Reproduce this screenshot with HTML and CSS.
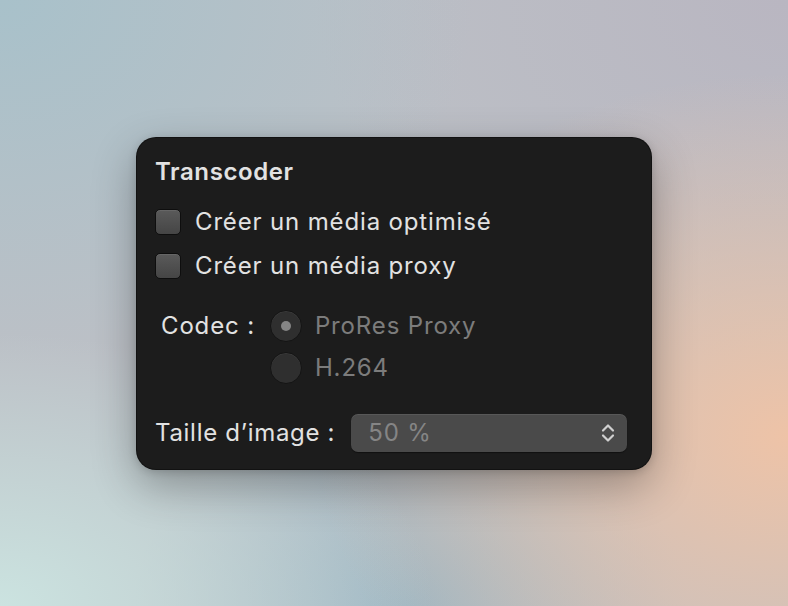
FILE: index.html
```html
<!DOCTYPE html>
<html lang="fr">
<head>
  <meta charset="UTF-8">
  <title>Transcoder</title>
  <link rel="stylesheet" href="styles.css">
</head>
<body>

  <div class="panel">
    <h2 class="title">Transcoder</h2>

    <div class="checks">
      <label class="check-row"><span class="checkbox"></span>Créer un média optimisé</label>
      <label class="check-row"><span class="checkbox"></span>Créer un média proxy</label>
    </div>

    <div class="codec-row">
      <span class="codec-label">Codec :</span>
      <div class="radio-group">
        <label class="radio-row"><span class="radio selected"></span>ProRes Proxy</label>
        <label class="radio-row"><span class="radio"></span>H.264</label>
      </div>
    </div>

    <div class="size-row">
      <span class="size-label">Taille d’image :</span>
      <div class="select">
        <span class="select-value">50 %</span>
        <svg class="stepper" width="14" height="20" viewBox="0 0 14 20">
          <path d="M2 7.5 L7 2.5 L12 7.5" fill="none" stroke="#d0d0d0" stroke-width="2.2" stroke-linecap="round" stroke-linejoin="round"/>
          <path d="M2 12.5 L7 17.5 L12 12.5" fill="none" stroke="#d0d0d0" stroke-width="2.2" stroke-linecap="round" stroke-linejoin="round"/>
        </svg>
      </div>
    </div>
  </div>

</body>
</html>
```

FILE: styles.css
```css
* {
  box-sizing: border-box;
  margin: 0;
  padding: 0;
}

body {
  font-family: Inter, 'Noto Sans', sans-serif;
  height: 606px;
  overflow: hidden;
  display: flex;
  justify-content: center;
  align-items: center;
  background-color: #bcc0c6;
  background-image:
    radial-gradient(ellipse 60% 60% at 100% 72%, #eec3a7 0%, rgba(238, 195, 167, 0) 100%),
    radial-gradient(ellipse 55% 45% at 0% 100%, #cbe3e0 0%, rgba(203, 227, 224, 0) 100%),
    radial-gradient(ellipse 35% 35% at 52% 100%, #9db6c3 0%, rgba(157, 182, 195, 0) 100%),
    radial-gradient(ellipse 60% 60% at 0% 0%, #a8c1ca 0%, rgba(168, 193, 202, 0) 100%),
    radial-gradient(ellipse 60% 60% at 100% 0%, #b9b6c1 0%, rgba(185, 182, 193, 0) 100%);
}

.panel {
  width: 516px;
  height: 333px;
  background: #1c1c1c;
  border-radius: 20px;
  border: 1px solid rgba(0, 0, 0, 0.35);
  box-shadow: 0 16px 44px rgba(0, 0, 0, 0.3), 0 2px 8px rgba(0, 0, 0, 0.15);
  padding: 20px 18px 0 18px;
  color: #e2e2e2;
  display: flex;
  flex-direction: column;
}

.title {
  font-size: 24px;
  font-weight: 600;
  line-height: 28px;
  letter-spacing: 0.6px;
}

.checks {
  margin-top: 23px;
  display: flex;
  flex-direction: column;
  gap: 18px;
}

.check-row {
  display: flex;
  align-items: center;
  gap: 14px;
  font-size: 24px;
  letter-spacing: 0.85px;
  height: 26px;
}

.checkbox {
  width: 26px;
  height: 26px;
  border-radius: 5px;
  background: linear-gradient(#5a5a5a, #454545);
  border: 1px solid #0e0e0e;
  box-shadow: inset 0 1px 0 rgba(255, 255, 255, 0.08);
}

.codec-row {
  margin-top: 31px;
  display: flex;
  padding-left: 6px;
}

.codec-label {
  font-size: 24px;
  letter-spacing: 0.85px;
  line-height: 32px;
  margin-right: 15px;
}

.radio-group {
  display: flex;
  flex-direction: column;
  gap: 10px;
}

.radio-row {
  display: flex;
  align-items: center;
  gap: 13px;
  font-size: 24px;
  letter-spacing: 0.85px;
  height: 32px;
  color: #7c7c7c;
}

.radio {
  width: 32px;
  height: 32px;
  border-radius: 50%;
  background: #2f2f2f;
  border: 1px solid #141414;
  box-shadow: inset 0 1px 0 rgba(255, 255, 255, 0.06);
  display: flex;
  justify-content: center;
  align-items: center;
}

.radio.selected::after {
  content: "";
  width: 10px;
  height: 10px;
  border-radius: 50%;
  background: #858585;
}

.size-row {
  margin-top: 30px;
  display: flex;
  align-items: center;
}

.size-label {
  font-size: 24px;
  letter-spacing: 0.7px;
  margin-right: 16px;
}

.select {
  width: 276px;
  height: 38px;
  border-radius: 7px;
  background: #4a4a4a;
  box-shadow: inset 0 1px 0 rgba(255, 255, 255, 0.08), 0 1px 1px rgba(0, 0, 0, 0.4);
  display: flex;
  align-items: center;
  justify-content: space-between;
  padding: 0 12px 0 17px;
}

.select-value {
  font-size: 24px;
  letter-spacing: 0.85px;
  color: #858585;
}
```
